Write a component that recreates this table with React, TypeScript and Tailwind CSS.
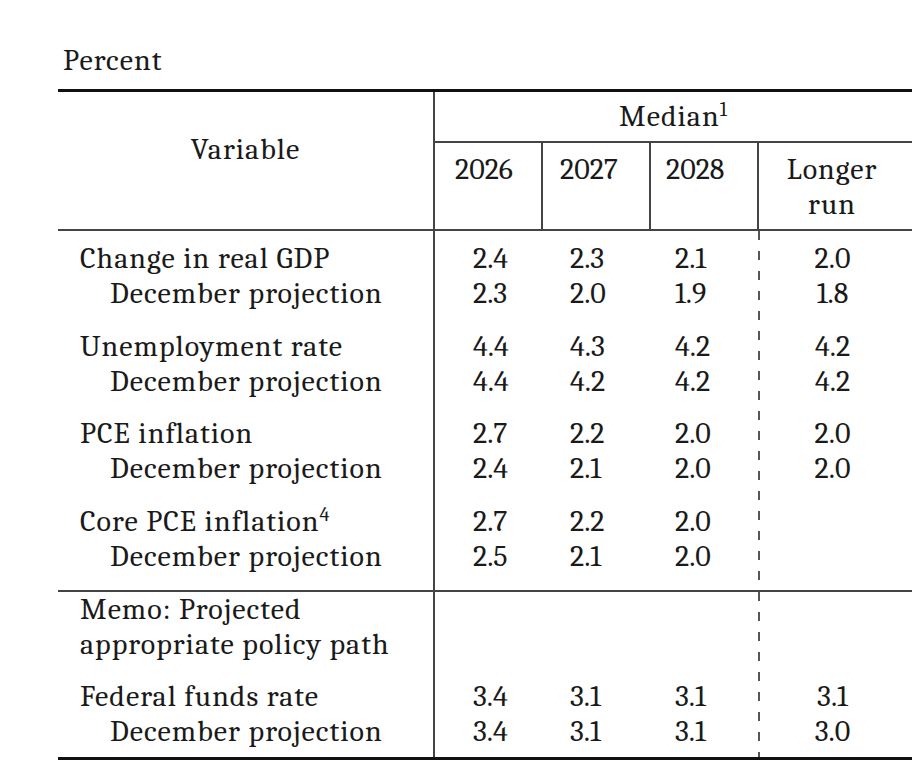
import React from 'react';

type Row = { label: React.ReactNode; indent?: boolean; v: string[]; lr?: string };

const groups: Row[][] = [
  [
    { label: 'Change in real GDP', v: ['2.4', '2.3', '2.1'], lr: '2.0' },
    { label: 'December projection', indent: true, v: ['2.3', '2.0', '1.9'], lr: '1.8' },
  ],
  [
    { label: 'Unemployment rate', v: ['4.4', '4.3', '4.2'], lr: '4.2' },
    { label: 'December projection', indent: true, v: ['4.4', '4.2', '4.2'], lr: '4.2' },
  ],
  [
    { label: 'PCE inflation', v: ['2.7', '2.2', '2.0'], lr: '2.0' },
    { label: 'December projection', indent: true, v: ['2.4', '2.1', '2.0'], lr: '2.0' },
  ],
  [
    {
      label: (
        <>
          Core PCE inflation<sup className="text-[20px]">4</sup>
        </>
      ),
      v: ['2.7', '2.2', '2.0'],
    },
    { label: 'December projection', indent: true, v: ['2.5', '2.1', '2.0'] },
  ],
];

const memoGroups: Row[][] = [
  [
    { label: 'Memo: Projected', v: ['', '', ''] },
    { label: 'appropriate policy path', v: ['', '', ''] },
  ],
  [
    { label: 'Federal funds rate', v: ['3.4', '3.1', '3.1'], lr: '3.1' },
    { label: 'December projection', indent: true, v: ['3.4', '3.1', '3.1'], lr: '3.0' },
  ],
];

// per-column left padding of the value text
const valuePad = ['pl-[38px]', 'pl-[27px]', 'pl-[24px]'];
const colWidth = ['w-[108px]', 'w-[108px]', 'w-[107px]'];

const Dashed = () => (
  <div className="w-[2px] self-stretch bg-[repeating-linear-gradient(to_bottom,#555_0px,#555_9px,transparent_9px,transparent_20px)]" />
);

const Section = ({ data, pad, className }: { data: Row[][]; pad: string; className?: string }) => (
  <div className={`flex ${className ?? ''}`}>
    <div className={`w-[377px] border-r-2 border-[#444] flex flex-col gap-[17.5px] ${pad}`}>
      {data.map((g, gi) => (
        <div key={gi}>
          {g.map((r, ri) => (
            <div key={ri} className={`h-[35px] whitespace-nowrap tracking-[1px] ${r.indent ? 'pl-[52px]' : 'pl-[22px]'}`}>
              {r.label}
            </div>
          ))}
        </div>
      ))}
    </div>
    {[0, 1, 2].map((c) => (
      <div key={c} className={`${colWidth[c]} flex flex-col gap-[17.5px] ${pad}`}>
        {data.map((g, gi) => (
          <div key={gi}>
            {g.map((r, ri) => (
              <div key={ri} className={`h-[35px] ${valuePad[c]}`}>
                {r.v[c]}
              </div>
            ))}
          </div>
        ))}
      </div>
    ))}
    <Dashed />
    <div className={`flex-1 flex flex-col gap-[17.5px] ${pad}`}>
      {data.map((g, gi) => (
        <div key={gi}>
          {g.map((r, ri) => (
            <div key={ri} className="h-[35px] text-center pr-[7px]">
              {r.lr ?? ''}
            </div>
          ))}
        </div>
      ))}
    </div>
  </div>
);

export default function App() {
  return (
    <div className="bg-white min-h-[769px] text-[#1a1a1a] text-[30px] leading-[35px] font-serif pt-[43px]">
      <div className="pl-[63px] tracking-[1px]">Percent</div>
      <div className="ml-[58px] mt-[11px] border-t-[3px] border-b-[3px] border-[#111]">
        {/* header */}
        <div className="flex border-b-2 border-[#444]">
          <div className="w-[377px] border-r-2 border-[#444] text-center pt-[40px] tracking-[1px]">Variable</div>
          <div className="flex-1 flex flex-col">
            <div className="text-center pt-[7px] pb-[7px] border-b-2 border-[#444] tracking-[1px]">
              Median<sup className="text-[20px]">1</sup>
            </div>
            <div className="flex">
              <div className="w-[108px] border-r-2 border-[#444] pl-[20px] pt-[9px]">2026</div>
              <div className="w-[108px] border-r-2 border-[#444] pl-[17px] pt-[9px]">2027</div>
              <div className="w-[108px] border-r-2 border-[#444] pl-[15px] pt-[9px]">2028</div>
              <div className="flex-1 text-center pr-[7px] pt-[9px] pb-[7px] tracking-[1px]">
                <div>Longer</div>
                <div>run</div>
              </div>
            </div>
          </div>
        </div>
        <Section data={groups} pad="pt-[10px] pb-[16px]" className="border-b-2 border-[#444]" />
        <Section data={memoGroups} pad="pb-[8px]" />
      </div>
    </div>
  );
}
